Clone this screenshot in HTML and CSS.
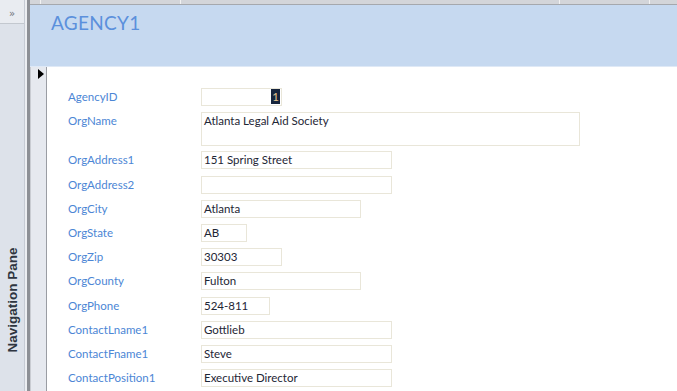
FILE: index.html
```html
<!DOCTYPE html>
<html>
<head>
<meta charset="utf-8">
<link rel="stylesheet" href="styles.css">
</head>
<body>
<div class="app">
  <aside class="nav">
    <div class="nav-btn">&raquo;</div>
    <div class="nav-label"><span>Navigation Pane</span></div>
  </aside>
  <div class="nav-gap"></div>
  <div class="nav-edge"></div>
  <main class="main">
    <div class="ruler">
      <span class="tick t1"></span>
      <span class="tick t2"></span>
      <span class="tick t3"></span>
      <span class="tick t4"></span>
    </div>
    <header class="header"><h1>AGENCY1</h1></header>
    <div class="detail">
      <div class="selector"><span class="arrow"></span></div>
      <div class="form">
        <div class="row"><label>AgencyID</label><div class="field w80 num"><span class="sel">1</span></div></div>
        <div class="row tall"><label>OrgName</label><div class="field w378 h33">Atlanta Legal Aid Society</div></div>
        <div class="row"><label>OrgAddress1</label><div class="field w190">151 Spring Street</div></div>
        <div class="row"><label>OrgAddress2</label><div class="field w190"></div></div>
        <div class="row"><label>OrgCity</label><div class="field w159">Atlanta</div></div>
        <div class="row"><label>OrgState</label><div class="field w45">AB</div></div>
        <div class="row"><label>OrgZip</label><div class="field w80">30303</div></div>
        <div class="row"><label>OrgCounty</label><div class="field w159">Fulton</div></div>
        <div class="row"><label>OrgPhone</label><div class="field w68">524-811</div></div>
        <div class="row"><label>ContactLname1</label><div class="field w190">Gottlieb</div></div>
        <div class="row"><label>ContactFname1</label><div class="field w190">Steve</div></div>
        <div class="row"><label>ContactPosition1</label><div class="field w190">Executive Director</div></div>
      </div>
    </div>
  </main>
</div>
</body>
</html>
```

FILE: styles.css
```css
html, body {
  margin: 0;
  padding: 0;
  width: 677px;
  height: 391px;
  overflow: hidden;
  background: #ffffff;
  font-family: "Lato", "Liberation Sans", sans-serif;
}

.app {
  display: flex;
  height: 391px;
}

.nav {
  width: 24px;
  background: #dde2ea;
  border-right: 1px solid #c6cbd4;
  display: flex;
  flex-direction: column;
}

.nav-btn {
  height: 23px;
  background: #e9ecf1;
  border-bottom: 1px solid #c3c8cf;
  color: #6f737a;
  font-size: 10px;
  line-height: 28px;
  text-align: center;
  font-family: "DejaVu Sans", sans-serif;
}

.nav-label {
  flex: 1;
  position: relative;
}

.nav-label span {
  position: absolute;
  left: 50%;
  top: 276px;
  transform: translate(-50%, -50%) rotate(-90deg);
  white-space: nowrap;
  font-family: "Liberation Sans", sans-serif;
  font-weight: bold;
  font-size: 13.5px;
  color: #2e3540;
}

.nav-gap {
  width: 2px;
  background: #eceef2;
}

.nav-edge {
  width: 3px;
  background: #8d9096;
}

.main {
  flex: 1;
  display: flex;
  flex-direction: column;
  min-width: 0;
}

.ruler {
  height: 4px;
  background: #d3d5d9;
  border-bottom: 1px solid #a5a8ad;
  position: relative;
}

.tick {
  position: absolute;
  top: 0;
  width: 1px;
  height: 4px;
  background: #f2f2f2;
}
.t1 { left: 10px; }
.t2 { left: 150px; }
.t3 { left: 529px; }
.t4 { left: 619px; }

.header {
  height: 61px;
  background: #c6d9f0;
  border-bottom: 1px solid #dfe9f6;
  padding: 0 0 0 21px;
}

.header h1 {
  margin: 0;
  padding-top: 6px;
  font-family: "Lato", "Liberation Sans", sans-serif;
  font-weight: normal;
  font-size: 19px;
  line-height: 23px;
  color: #5b90dc;
  letter-spacing: 0.3px;
}

.detail {
  flex: 1;
  display: flex;
}

.selector {
  width: 15px;
  background: #e6e9ef;
  border-left: 1px solid #c9ccd2;
  border-right: 1px solid #9a9da3;
  position: relative;
}

.arrow {
  position: absolute;
  left: 7px;
  top: 2px;
  width: 0;
  height: 0;
  border-top: 5px solid transparent;
  border-bottom: 5px solid transparent;
  border-left: 6px solid #000000;
}

.form {
  flex: 1;
  padding: 21px 0 0 21px;
  display: flex;
  flex-direction: column;
  gap: 6.2px;
}

.row {
  display: flex;
  align-items: flex-start;
}

.row.tall {
  margin-bottom: -1px;
}

.row label {
  width: 133px;
  flex: none;
  font-size: 11.5px;
  line-height: 17px;
  color: #4c86d5;
}

.field {
  box-sizing: border-box;
  height: 18px;
  border: 1.5px solid #e9e6d9;
  padding: 0 2px;
  font-size: 11.5px;
  line-height: 15px;
  color: #1e2635;
  white-space: nowrap;
  overflow: hidden;
}

.field.num {
  text-align: right;
  padding: 0 1px 0 0;
}

.sel {
  display: inline-block;
  background: #17253d;
  color: #e3c48f;
  padding: 0 1px;
  line-height: 15px;
}

.w45 { width: 46px; }
.w68 { width: 69px; }
.w80 { width: 81px; }
.w159 { width: 160px; }
.w190 { width: 191px; }
.w378 { width: 379px; }
.h33 { height: 34px; }
```
